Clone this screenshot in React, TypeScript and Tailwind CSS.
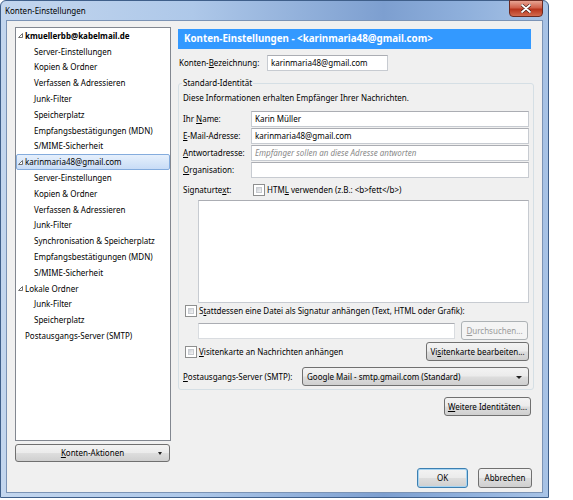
import React from "react";
import clsx from "clsx";

type TreeItem = {
  label: string;
  level: 0 | 1;
  bold?: boolean;
  arrow?: boolean;
  selected?: boolean;
};

const tree: TreeItem[] = [
  { label: "kmuellerbb@kabelmail.de", level: 0, bold: true, arrow: true },
  { label: "Server-Einstellungen", level: 1 },
  { label: "Kopien & Ordner", level: 1 },
  { label: "Verfassen & Adressieren", level: 1 },
  { label: "Junk-Filter", level: 1 },
  { label: "Speicherplatz", level: 1 },
  { label: "Empfangsbestätigungen (MDN)", level: 1 },
  { label: "S/MIME-Sicherheit", level: 1 },
  { label: "karinmaria48@gmail.com", level: 0, arrow: true, selected: true },
  { label: "Server-Einstellungen", level: 1 },
  { label: "Kopien & Ordner", level: 1 },
  { label: "Verfassen & Adressieren", level: 1 },
  { label: "Junk-Filter", level: 1 },
  { label: "Synchronisation & Speicherplatz", level: 1 },
  { label: "Empfangsbestätigungen (MDN)", level: 1 },
  { label: "S/MIME-Sicherheit", level: 1 },
  { label: "Lokale Ordner", level: 0, arrow: true },
  { label: "Junk-Filter", level: 1 },
  { label: "Speicherplatz", level: 1 },
  { label: "Postausgangs-Server (SMTP)", level: 0 },
];

// kleines "aufgeklappt"-Dreieck wie im Win7-Baum
function Twisty() {
  return (
    <svg width="5" height="5" viewBox="0 0 5 5" className="shrink-0">
      <path d="M4.5 0.5 L4.5 4.5 L0.5 4.5 Z" fill="#fff" stroke="#707070" strokeWidth="1" />
    </svg>
  );
}

function Btn({
  children,
  className,
  primary,
  disabled,
}: {
  children: React.ReactNode;
  className?: string;
  primary?: boolean;
  disabled?: boolean;
}) {
  return (
    <div
      className={clsx(
        "flex items-center justify-center whitespace-nowrap rounded-[3px] border text-[8px] leading-none",
        disabled
          ? "border-[#adb2b5] bg-[#f4f4f4] text-[#9a9a9a]"
          : "bg-[linear-gradient(#f3f3f3,#ebebeb_48%,#dddddd_52%,#cfcfcf)] text-black",
        !disabled && (primary ? "border-[#3c7fb1] shadow-[inset_0_0_0_1px_#a6d4f2]" : "border-[#707070]"),
        className
      )}
    >
      {children}
    </div>
  );
}

function Checkbox() {
  return (
    <div className="h-[12px] w-[12px] shrink-0 border border-[#8e8f8f] bg-white p-[2px]">
      <div className="h-full w-full border border-[#c9ccd1] bg-[linear-gradient(135deg,#cbcfd5,#f6f6f6)]" />
    </div>
  );
}

function Input({ className, value, placeholder }: { className?: string; value?: string; placeholder?: string }) {
  return (
    <div
      className={clsx(
        "flex h-[16px] items-center whitespace-nowrap border border-[#c7cbd1] border-t-[#abadb3] bg-white px-[3px] text-[8px] leading-none",
        className
      )}
    >
      {value ? (
        <span className="text-black">{value}</span>
      ) : placeholder ? (
        <span className="italic text-[#8a8a8a]">{placeholder}</span>
      ) : null}
    </div>
  );
}

export default function App() {
  return (
    <div className="h-[500px] w-[573px] whitespace-nowrap bg-white font-['Noto_Sans',sans-serif] text-[8px] text-black">
      {/* Fensterrahmen */}
      <div className="relative flex h-[498px] w-[549px] flex-col rounded-t-[6px] border border-[#3f5f8a] bg-[linear-gradient(to_right,#c3d6ee,#aec8e9_35%,#7d9fd0_70%,#8fb0dc_85%,#a8c3e6)]">
        <div className="flex h-[19px] items-center pl-[4px] text-[8px] text-black">Konten-Einstellungen</div>
        <div className="absolute right-[5px] top-[-1px] flex h-[17px] w-[34px] items-center justify-center rounded-b-[4px] border border-[#6b2a22] bg-[linear-gradient(#e8a493,#d0604a_45%,#b8341c_55%,#d26a4f)]">
          <svg width="10" height="9" viewBox="0 0 10 9">
            <path d="M1 1 L9 8 M9 1 L1 8" stroke="#3a1510" strokeWidth="3" strokeLinecap="round" />
            <path d="M1 1 L9 8 M9 1 L1 8" stroke="#fff" strokeWidth="1.8" strokeLinecap="round" />
          </svg>
        </div>

        {/* Client-Bereich */}
        <div className="mx-[5px] flex h-[473px] border border-[#7b93b5] bg-[#f0f0f0] pb-[4px] pl-[8px] pt-[6px]">
          {/* linke Spalte */}
          <div className="flex w-[156px] flex-col">
            <div className="h-[414px] border border-[#828790] bg-white">
              {tree.map((item, i) => (
                <div
                  key={i}
                  className={clsx(
                    "flex h-[15.8px] items-center",
                    item.selected && "rounded-[2px] border border-[#84acdd] bg-[linear-gradient(#e6f0fc,#c8dcf6)]"
                  )}
                >
                  {item.level === 0 ? (
                    <div className={clsx("flex items-center", item.selected ? "pl-[1px]" : "pl-[2px]")}>
                      <div className="flex w-[7px] justify-start">{item.arrow && <Twisty />}</div>
                      <span className={clsx(item.bold && "font-bold")}>{item.label}</span>
                    </div>
                  ) : (
                    <span className="pl-[18px]">{item.label}</span>
                  )}
                </div>
              ))}
            </div>
            <Btn className="relative mt-[3px] h-[18px] w-[155px]">
              <span>
                <u>K</u>onten-Aktionen
              </span>
              <span className="absolute right-[7px] top-[7px] h-0 w-0 border-x-[2px] border-t-[3px] border-x-transparent border-t-[#222]" />
            </Btn>
          </div>

          {/* rechte Spalte */}
          <div className="ml-[7px] flex w-[355px] flex-col">
            <div className="mt-[2px] flex h-[20px] w-[353px] items-center bg-[#3399ff] pl-[6px] text-[9.75px] font-bold text-white">
              Konten-Einstellungen - &lt;karinmaria48@gmail.com&gt;
            </div>

            <div className="mt-[6px] flex h-[16px] items-center pl-[1px]">
              <span className="w-[88px]">
                Konten-<u>B</u>ezeichnung:
              </span>
              <Input className="w-[121px]" value="karinmaria48@gmail.com" />
            </div>

            {/* Gruppe Standard-Identität */}
            <div className="relative mt-[12px] h-[307px] w-[356px] rounded-[3px] border border-[#d5dfe5] px-[4px] pt-[7px]">
              <span className="absolute left-[3px] top-[-8px] bg-[#f0f0f0] px-[1px] leading-[14px]">Standard-Identität</span>
              <div className="leading-[14px]">Diese Informationen erhalten Empfänger Ihrer Nachrichten.</div>

              <div className="mt-[6px] flex flex-col gap-[1px]">
                <div className="flex items-center">
                  <span className="w-[68px]">
                    Ihr <u>N</u>ame:
                  </span>
                  <Input className="w-[278px]" value="Karin Müller" />
                </div>
                <div className="flex items-center">
                  <span className="w-[68px]">
                    <u>E</u>-Mail-Adresse:
                  </span>
                  <Input className="w-[278px]" value="karinmaria48@gmail.com" />
                </div>
                <div className="flex items-center">
                  <span className="w-[68px]">
                    <u>A</u>ntwortadresse:
                  </span>
                  <Input className="w-[278px]" placeholder="Empfänger sollen an diese Adresse antworten" />
                </div>
                <div className="flex items-center">
                  <span className="w-[68px]">
                    <u>O</u>rganisation:
                  </span>
                  <Input className="w-[278px]" />
                </div>
              </div>

              <div className="mt-[5px] flex h-[14px] items-center">
                <span className="w-[70px]">
                  Signaturte<u>x</u>t:
                </span>
                <Checkbox />
                <span className="ml-[2px]">
                  HTM<u>L</u> verwenden (z.B.: &lt;b&gt;fett&lt;/b&gt;)
                </span>
              </div>

              <div className="ml-[15px] mt-[3px] h-[103px] w-[331px] border border-[#c7cbd1] border-t-[#abadb3] bg-white" />

              <div className="mt-[1px] flex h-[13px] items-center pl-[2px]">
                <Checkbox />
                <span className="ml-[2px]">
                  S<u>t</u>attdessen eine Datei als Signatur anhängen (Text, HTML oder Grafik):
                </span>
              </div>

              <div className="ml-[15px] mt-[4px] flex h-[19px] items-center">
                <Input className="w-[257px] border-[#d9dce0] bg-[#f4f4f4]" />
                <Btn disabled className="ml-[6px] h-[19px] w-[67px]">
                  <span>
                    <u>D</u>urchsuchen...
                  </span>
                </Btn>
              </div>

              <div className="mt-[2px] flex h-[19px] items-center pl-[2px]">
                <Checkbox />
                <span className="ml-[2px]">
                  <u>V</u>isitenkarte an Nachrichten anhängen
                </span>
                <Btn className="ml-auto h-[19px] w-[103px]">
                  <span>
                    Vi<u>s</u>itenkarte bearbeiten...
                  </span>
                </Btn>
              </div>

              <div className="mt-[6px] flex h-[19px] items-center">
                <span className="w-[119px]">
                  <u>P</u>ostausgangs-Server (SMTP):
                </span>
                <Btn className="relative h-[19px] w-[227px] justify-start pl-[4px]">
                  <span>Google Mail - smtp.gmail.com (Standard)</span>
                  <span className="absolute right-[6px] top-[8px] h-0 w-0 border-x-[3px] border-t-[3px] border-x-transparent border-t-[#222]" />
                </Btn>
              </div>
            </div>

            <Btn className="mr-[2px] mt-[7px] h-[19px] w-[87px] self-end">
              <span>
                <u>W</u>eitere Identitäten...
              </span>
            </Btn>

            <div className="mr-[1px] mt-auto flex justify-end gap-[10px]">
              <Btn primary className="h-[20px] w-[51px]">
                OK
              </Btn>
              <Btn className="h-[20px] w-[54px]">Abbrechen</Btn>
            </div>
          </div>
        </div>
      </div>
    </div>
  );
}
